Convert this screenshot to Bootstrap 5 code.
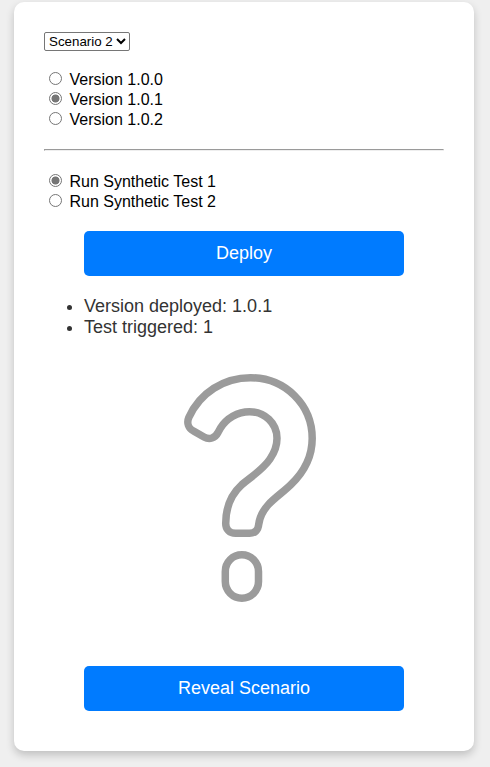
<!DOCTYPE html>
<html lang="en">
<head>
<meta charset="utf-8">
<meta name="viewport" content="width=device-width, initial-scale=1">
<title>Scenario deployer</title>
<link href="https://cdn.jsdelivr.net/npm/bootstrap@5.3.0/dist/css/bootstrap.min.css" rel="stylesheet">
<style>
body{background:#efefef;font-family:"Liberation Sans",Arial,sans-serif;color:#000;line-height:20px;height:767px;overflow:hidden}
.panel{width:460px;height:749px;margin:2px 0 0 14px;padding:30px 30px 40px;border-radius:10px;box-shadow:0 4px 8px rgba(0,0,0,.2)}
.picker{width:86px;height:19px;font-size:13.33px;line-height:17px;color:#000;border:1px solid #767676;border-radius:2px;background:#fff;padding:0;display:block}
.choices{padding-left:5px}
.picker + .choices{margin-top:19px}
.choice{height:20px}
.choice input{appearance:none;width:13px;height:13px;margin:0 7.5px 3px 0;border:1px solid #767676;border-radius:50%;background:#fff;flex:none}
.choice input:checked{background:radial-gradient(circle,#767676 3.6px,#fff 4.4px)}
.rule{height:2px;margin:19px 0 21px;border:1px solid;border-color:#9a9a9a #eee #eee #9a9a9a;opacity:1}
.action{width:320px;height:45px;font-size:18px;line-height:21px;padding:0;background:#007bff;color:#fff;border:0;border-radius:5px}
.action:hover{background:#0069d9;color:#fff}
.choices + .action{margin-top:19px}
.status{font-size:18px;line-height:21px;color:#333;padding-left:40px;margin:20px 0 22px}
</style>
<script src="https://cdn.jsdelivr.net/npm/bootstrap@5.3.0/dist/js/bootstrap.bundle.min.js"></script>
</head>
<body>
<main class="panel bg-white d-flex flex-column">
  <select class="picker" aria-label="Scenario"><option>Scenario 1</option><option selected>Scenario 2</option></select>
  <div class="choices">
    <label class="choice d-flex align-items-center"><input type="radio" name="version">Version 1.0.0</label>
    <label class="choice d-flex align-items-center"><input type="radio" name="version" checked>Version 1.0.1</label>
    <label class="choice d-flex align-items-center"><input type="radio" name="version">Version 1.0.2</label>
  </div>
  <hr class="rule">
  <div class="choices">
    <label class="choice d-flex align-items-center"><input type="radio" name="test" checked>Run Synthetic Test 1</label>
    <label class="choice d-flex align-items-center"><input type="radio" name="test">Run Synthetic Test 2</label>
  </div>
  <button class="btn action align-self-center">Deploy</button>
  <ul class="status"><li>Version deployed: 1.0.1</li><li>Test triggered: 1</li></ul>
  <svg class="mx-auto flex-shrink-0" width="260" height="260" viewBox="114 360 260 260" fill="none" stroke="#9b9b9b" stroke-width="7.5" stroke-linejoin="round" aria-label="Unknown scenario">
    <path d="M188.8 417.5C200 392.500 224 377.7 250.5 377.7C285 377.7 312.2 404.500 312.2 438.5C312.2 456 304 472 291 484.500C284 491.500 275.500 497 268.500 504.500C262.500 511 259.500 518 258.700 524.500C258.200 530 255 533.300 249.500 533.300H235.500C229.700 533.300 225.700 529.500 225.700 523.500C225.700 508 231.500 494 242 484.500C251 477 263 469.500 270 459C274.500 452.500 277 446 277 438.300C277 423 264.500 411.700 249.500 411.700C237.500 411.700 226.500 418.500 220.500 428L218 432.500C215 438.300 209.500 440 204 437L193.500 431C188.500 428.500 186.500 423 188.800 417.500Z"/>
    <rect x="225.300" y="554.800" width="33.200" height="43.400" rx="16.600"/>
  </svg>
  <button class="btn action align-self-center mt-auto">Reveal Scenario</button>
</main>
</body>
</html>
